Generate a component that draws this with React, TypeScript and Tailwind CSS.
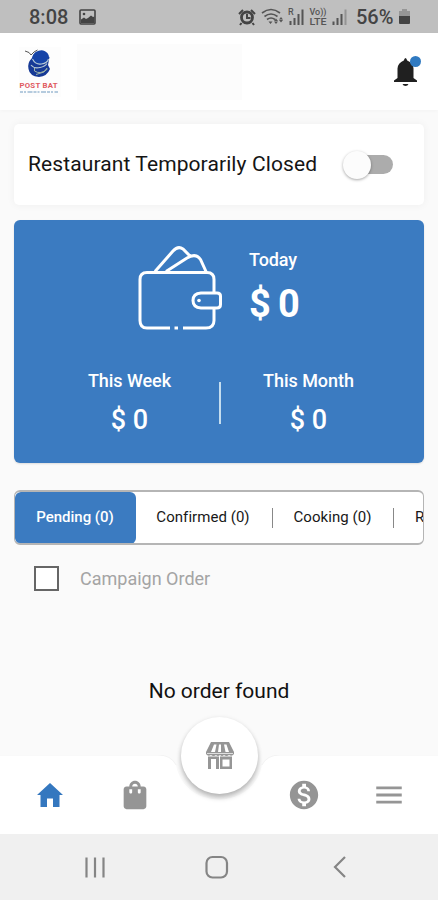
import { ReactNode } from "react";
import { MdShoppingBag, MdMonetizationOn, MdMenu } from "react-icons/md";

function StatusBar() {
  return (
    <div className="flex h-[33px] shrink-0 items-center bg-[#bfbfbf] pl-[29px] text-[#444]">
      <span className="w-[50px] pt-px text-[20px] leading-none font-medium">8:08</span>
      <svg width="18" height="16" viewBox="0 0 18 16" className="mt-px">
        <rect x="1" y="1" width="15" height="14" rx="1" fill="none" stroke="#444" strokeWidth="1.6" />
        <path d="M2 14v-3.500l3-2 2 1.500 2-1 3-2.500 2 1.500 1.500-.5V14z" fill="#444" />
        <circle cx="5" cy="5" r="1.300" fill="#444" />
      </svg>
      <svg width="119" height="24" viewBox="237 5 119 24" className="ml-[140px]" fill="#555">
        <circle cx="247" cy="17.500" r="5.500" fill="none" stroke="#444" strokeWidth="2.800" />
        <path d="M247 14v4h3.500M239 14l4-4M255 14l-4-4M241.500 23l-1.500 2M252.500 23l1.500 2" fill="none" stroke="#444" strokeWidth="2" />
        <g fill="none" stroke="#555" strokeWidth="1.600">
          <path d="M262 13q9-7 18 0M264.500 16.500q6.500-5 13 0M267 19.500q4-3 8 0" />
        </g>
        <path d="M268.500 21.500h4l-2 2.500zM274 21l2-2.500 2 2.500zM274 21.500h4l-2 2.500zM279 19.500l2-2.500 2 2.500zM279 20h4l-2 2.500z" />
        <text x="288" y="15" fontSize="9" fontWeight="500">R</text>
        <path d="M289.500 21h2v4h-2zM293.500 18h2v7h-2zM297.500 14h2v11h-2zM301.500 9.500h2v15.500h-2z" />
        <text x="309.500" y="15" fontSize="8.200" fontWeight="500" textLength="17" lengthAdjust="spacingAndGlyphs">Vo))</text>
        <text x="309.500" y="25" fontSize="8.200" fontWeight="500" textLength="17" lengthAdjust="spacingAndGlyphs">LTE</text>
        <path d="M332.500 21.500h2v3.500h-2zM336.500 18h2v7h-2zM340.500 14h2v11h-2z" />
        <path d="M344.500 9.500h2v15.500h-2z" opacity=".4" />
      </svg>
      <span className="w-[43px] pt-px text-[20px] leading-none font-medium">56%</span>
      <svg width="12" height="17" viewBox="0 0 12 17">
        <path d="M3 1h5v2h3v5H0V3h3z" fill="#969696" />
        <path d="M0 8h11v7q0 1-1 1H1q-1 0-1-1z" fill="#444" />
      </svg>
    </div>
  );
}

function Logo() {
  return (
    <svg width="42" height="50" viewBox="0 0 42 50">
      <rect width="42" height="50" fill="#fdfdfd" />
      <path d="M6 4l4 1.500 2 2.500 3-3 3.500-2" fill="none" stroke="#555" strokeWidth="1" />
      <path d="M13 11q-5 5-3.500 11 1 7 10.500 8 8-.5 11-8l-2-4 1.500-8-8-4-6 1z" fill="#173a96" />
      <ellipse cx="21.500" cy="10.500" rx="8.500" ry="7" fill="#1644a8" transform="rotate(-15 21.500 10.500)" />
      <path d="M13.500 12q3 6 9 5t7-5M12 18q3 4 9 2.500 5-1 7-4" fill="none" stroke="#b9cbd6" strokeWidth="1.100" />
      <path d="M15.500 21v3q6 4 13-2M17 27.500l8-2.500 3-4" fill="none" stroke="#9eb4a9" strokeWidth="1" />
      <text x="0.500" y="41" fontSize="7.800" fontWeight="700" fill="#e05a60" textLength="38">POST BAT</text>
      <path d="M1 45h38" stroke="#9dbbd3" strokeWidth="1.500" strokeDasharray="3 1 2 1.500 5 1" />
    </svg>
  );
}

function Header() {
  return (
    <header className="flex h-[77px] shrink-0 items-center bg-white pl-[19px] shadow-[0_1px_4px_rgba(0,0,0,0.03)]">
      <div className="mt-px"><Logo /></div>
      <div className="ml-4 h-[56px] w-[165px] bg-[#fcfcfc]" />
      <svg width="30" height="34" viewBox="0 0 30 34" className="ml-[151px]">
        <path d="M12.500 3q1 0 1.700 2.500 6 2.500 6.300 8V23l3.500 2.500v1.500H1v-1.500L4.500 23v-9.500q.3-5.500 6.300-8Q11.500 3 12.500 3z" fill="#202020" />
        <path d="M9.500 29h6q-.8 2-3 2t-3-2z" fill="#202020" />
        <circle cx="22.500" cy="6.500" r="5.500" fill="#307ac1" />
      </svg>
    </header>
  );
}

function Wallet() {
  return (
    <svg width="86" height="86" viewBox="0 0 86 86" fill="none" stroke="white" strokeWidth="3">
      <path d="M33 83H10Q3 83 3 75.500V34.500Q3 27.500 10 27.500H70Q77 27.500 77 34.500V47M77 63.500V75.500Q77 83 69 83H46" />
      <path d="M37.500 83h3.500" />
      <path d="M18 26.500L36 6Q41 .5 46 4L53.500 11.500M29 26.500L50 13Q59 7.500 63.500 14.500L69 26.500" />
      <path d="M80 48H64Q56 48.500 56 55.500T64 63H80Q83.500 63 83.500 59.500V51Q83.500 48 80 48z" />
      <circle cx="62" cy="55.500" r="1.800" fill="white" stroke="none" />
    </svg>
  );
}

function Earnings() {
  return (
    <section className="mt-[15px] flex h-[243px] flex-col rounded-[6px] bg-[#3b7bc1] text-white shadow-[0_1px_2px_rgba(0,0,0,0.12)]">
      <div className="flex h-[140px] pt-[25px] pl-[123px]">
        <Wallet />
        <div className="ml-[26px] pt-[5px] font-medium">
          <div className="text-[18px] leading-[20px] tracking-[-0.1px]">Today</div>
          <div className="mt-[13px] text-[38px] leading-[42px] font-bold tracking-[-1.1px]">$ 0</div>
        </div>
      </div>
      <div className="flex pt-[11px] pl-[26px] text-center font-medium">
        <div className="w-[179px]">
          <div className="text-[18px] leading-[20px] tracking-[-0.05px]">This Week</div>
          <div className="mt-[13px] text-[27px] leading-[32px]">$ 0</div>
        </div>
        <div className="mt-[11px] h-[42px] w-[2px] bg-[#c4ddef]" />
        <div className="w-[175px]">
          <div className="text-[18px] leading-[20px] tracking-[-0.05px]">This Month</div>
          <div className="mt-[13px] text-[27px] leading-[32px]">$ 0</div>
        </div>
      </div>
    </section>
  );
}

function Tabs() {
  return (
    <div className="mt-[27px] flex h-[55px] items-center overflow-hidden rounded-[6px] border border-t-2 border-b-2 border-[#b5b5b5] bg-white text-[15px] whitespace-nowrap text-[#181818]">
      <div className="flex h-[52px] w-[121px] shrink-0 items-center justify-center rounded-[6px] bg-[#3b7bc1] pr-px font-medium text-white">Pending (0)</div>
      <div className="flex w-[136px] shrink-0 justify-center pr-[2px] tracking-[0.05px]">Confirmed (0)</div>
      <div className="h-[20px] w-px shrink-0 bg-[#888]" />
      <div className="flex w-[120px] shrink-0 justify-center pr-px tracking-[0.05px]">Cooking (0)</div>
      <div className="h-[20px] w-px shrink-0 bg-[#888]" />
      <div className="ml-[21px] shrink-0">Ready for handover (0)</div>
    </div>
  );
}

function HomeIcon() {
  return (
    <svg width="26" height="24" viewBox="0 0 26 24" fill="currentColor">
      <path d="M13 0l13 12h-3.500v12h-6.500v-8.500h-6V24H3.500V12H0z" />
    </svg>
  );
}

function StoreIcon() {
  return (
    <svg width="28" height="28" viewBox="0 0 28 28" fill="#969696">
      <path d="M5 0h18l5 10v2q-2 3-5 1-2.500 2-5 0-2 2-4 0-2 2-4 0-2.500 2-5 0-3 2-5-1v-2z" />
      <path d="M8 2.500h2.500L9 10H5zM13 2.500h2v7.500h-3zM18 2.500h2.500l2.500 7.500h-3.500z" fill="white" />
      <path d="M1 11.500h26" stroke="white" strokeWidth=".7" />
      <path d="M2 14.500h11V27h-3V17H5v10H2zM14 14.500h12V27H14zM16.500 17.500v7h7v-7z" fillRule="evenodd" />
    </svg>
  );
}

function NavItem({ className, children }: { className: string; children: ReactNode }) {
  return <button className={"flex h-[34px] w-[34px] shrink-0 items-center justify-center text-[34px] " + className}>{children}</button>;
}

function BottomNav() {
  return (
    <nav className="relative h-[79px] shrink-0 text-[#959595]">
      <svg className="absolute inset-0" width="438" height="79" viewBox="0 0 438 79">
        <path d="M0 0H158Q171 0 176 10C185 56 253 56 262 10Q267 0 280 0H438V79H0z" fill="white" />
        <path d="M0 0H158Q171 0 176 10M262 10Q267 0 280 0H438" fill="none" stroke="#f3f3f3" />
      </svg>
      <button className="absolute -top-[38px] left-[181px] flex h-[77px] w-[77px] items-center justify-center rounded-full bg-white shadow-[0_4px_5px_rgba(0,0,0,0.22),0_1px_5px_rgba(0,0,0,0.10)]">
        <StoreIcon />
      </button>
      <div className="relative flex pt-[23px] pl-[33px]">
        <NavItem className="text-[#3477bf]"><HomeIcon /></NavItem>
        <NavItem className="ml-[51px]"><MdShoppingBag /></NavItem>
        <NavItem className="ml-[135px]"><MdMonetizationOn /></NavItem>
        <NavItem className="ml-[51px]"><MdMenu /></NavItem>
      </div>
    </nav>
  );
}

function SystemBar() {
  return (
    <div className="flex h-[66px] shrink-0 items-center bg-[#f0f0f0] pl-[84px]">
      <svg width="264" height="26" viewBox="84 0 264 26" fill="none" stroke="#858585" strokeWidth="2.200">
        <path d="M86.500 3.500v20M95 3.500v20M103.500 3.500v20M345 3l-10 10 10 10" />
        <rect x="206.500" y="3" width="20.500" height="20.500" rx="6" />
      </svg>
    </div>
  );
}

export default function App() {
  return (
    <div className="flex h-[900px] w-[438px] flex-col overflow-hidden bg-[#fafafa] font-['Roboto',sans-serif]">
      <StatusBar />
      <Header />
      <main className="flex min-h-0 flex-1 flex-col px-[14px] pt-[14px]">
        <section className="flex h-[81px] shrink-0 items-center rounded-[5px] bg-white pl-[14px] shadow-[0_0_8px_rgba(0,0,0,0.05)]">
          <h1 className="w-[315px] pt-px text-[21px] font-normal tracking-[0.1px] text-[#151515]">Restaurant Temporarily Closed</h1>
          <div className="flex h-[28px] w-[50px] items-center">
            <div className="ml-[8px] flex h-[19px] w-[42px] items-center rounded-full bg-[#acacac]">
              <div className="-ml-[8px] h-[28px] w-[28px] shrink-0 rounded-full bg-[#fcfcfc] shadow-[0_1px_3px_rgba(0,0,0,0.35)]" />
            </div>
          </div>
        </section>
        <Earnings />
        <Tabs />
        <label className="mt-[20px] flex h-[26px] items-center pl-[20px] text-[18px] text-[#a4a4a4]">
          <span className="mr-[21px] h-[25px] w-[25px] border-[2.500px] border-[#666] bg-white" />
          Campaign Order
        </label>
        <p className="mt-[87px] text-center text-[21px] leading-[26px] text-[#111]">No order found</p>
      </main>
      <BottomNav />
      <SystemBar />
    </div>
  );
}
